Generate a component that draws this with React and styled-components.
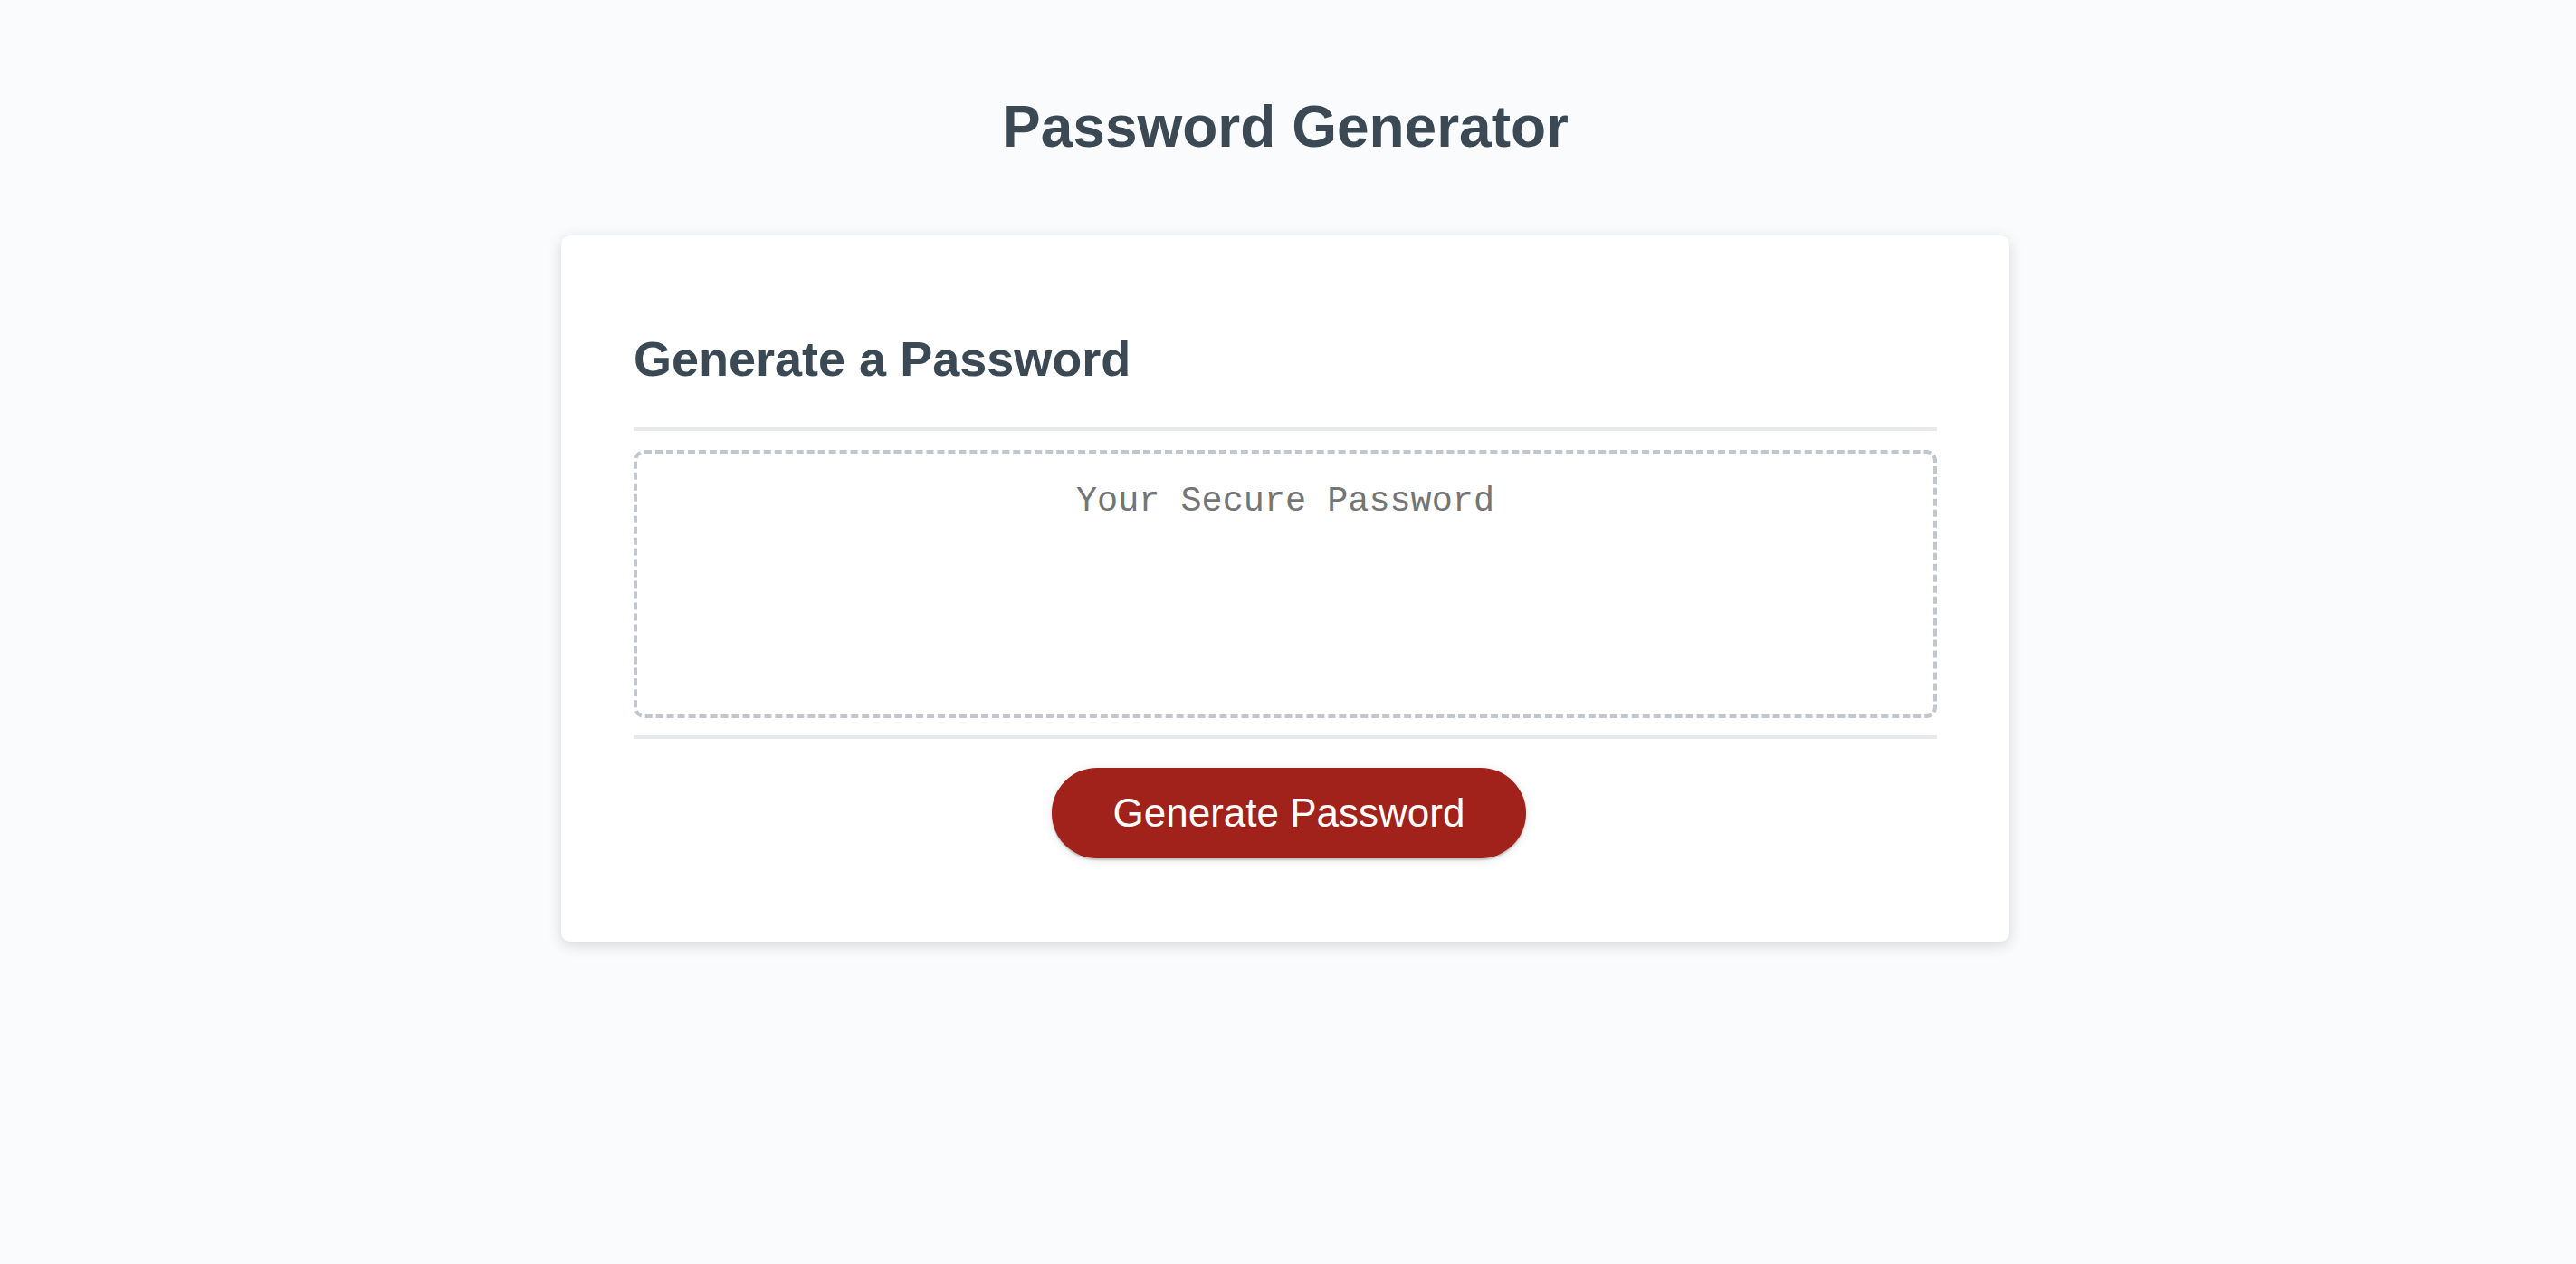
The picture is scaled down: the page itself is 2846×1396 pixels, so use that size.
import React from "react";
import styled, { createGlobalStyle } from "styled-components";

const GlobalStyle = createGlobalStyle`
  html, body {
    margin: 0;
    padding: 0;
    height: 100%;
  }
  body {
    background-color: #f9fbfd;
    font-family: "Liberation Sans", Arial, Helvetica, sans-serif;
  }
`;

const Wrapper = styled.div`
  padding: 60px 46px 0 40px;
  min-height: 1396px;
  box-sizing: border-box;
`;

const Header = styled.header`
  text-align: center;
  padding: 0 40px 40px;
  color: #3b4954;
`;

const Title = styled.h1`
  font-size: 64px;
  font-weight: 700;
  margin: 43px 0;
  line-height: normal;
`;

const Card = styled.div`
  background-color: #ffffff;
  border-radius: 10px;
  box-shadow: rgba(0, 0, 0, 0.15) 0px 4px 16px 0px;
  color: #3b4954;
  font-size: 36px;
  margin: 0 auto;
  max-width: 1600px;
  padding: 60px 80px;
  box-sizing: border-box;
`;

const CardHeader = styled.div`
  border-bottom: 4px solid #e7e9eb;
`;

const CardTitle = styled.h2`
  font-size: 54px;
  font-weight: 700;
  margin: 45px 0;
  line-height: normal;
`;

const CardBody = styled.div`
  padding: 21px 0 19px;
`;

const PasswordOutput = styled.div`
  box-sizing: border-box;
  width: 100%;
  height: 296px;
  padding: 31px 20px;
  border: 4px dashed #c0c7cf;
  border-radius: 12px;
  font-family: "Liberation Mono", "Courier New", monospace;
  font-size: 38.5px;
  line-height: normal;
  text-align: center;
  color: #757575;
  background: #ffffff;
`;

const CardFooter = styled.div`
  border-top: 4px solid #e7e9eb;
  text-align: center;
`;

const Button = styled.button`
  border: none;
  background-color: #a0221b;
  border-radius: 50px;
  box-shadow: rgba(0, 0, 0, 0.1) 0px 2px 12px 0px, rgba(0, 0, 0, 0.2) 0px 2px 2px 0px;
  color: #ffffff;
  display: inline-block;
  font-family: "Liberation Sans", Arial, Helvetica, sans-serif;
  font-size: 44px;
  line-height: 44px;
  margin: 32px 32px 32px 40px;
  padding: 28px 68px;
  text-align: center;
  cursor: pointer;
`;

export default function App() {
  return (
    <>
      <GlobalStyle />
      <Wrapper>
        <Header>
          <Title>Password Generator</Title>
        </Header>
        <Card>
          <CardHeader>
            <CardTitle>Generate a Password</CardTitle>
          </CardHeader>
          <CardBody>
            <PasswordOutput>Your Secure Password</PasswordOutput>
          </CardBody>
          <CardFooter>
            <Button>Generate Password</Button>
          </CardFooter>
        </Card>
      </Wrapper>
    </>
  );
}
